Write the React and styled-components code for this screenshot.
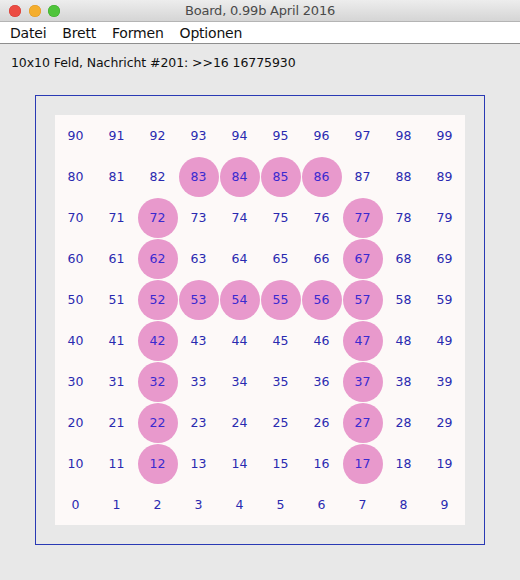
import React from "react";
import styled, { createGlobalStyle } from "styled-components";

const GlobalStyle = createGlobalStyle`
	html, body {
		margin: 0;
		padding: 0;
		background: #e8e8e8;
	}
	body {
		font-family: "DejaVu Sans", "Liberation Sans", sans-serif;
	}
`;

const marked = [83, 84, 85, 86, 72, 77, 62, 67, 52, 53, 54, 55, 56, 57, 42, 47, 32, 37, 22, 27, 12, 17];

function App() {
	const rows = [];
	for (let r = 9; r >= 0; r--) {
		for (let c = 0; c < 10; c++) {
			rows.push(r * 10 + c);
		}
	}

	return (
		<StyledWindow>
			<GlobalStyle />
			<StyledTitleBar>
				<StyledLights>
					<StyledLight color="#ec4b42" edge="#d33b33" />
					<StyledLight color="#f5ae2c" edge="#dd9620" />
					<StyledLight color="#4fc43b" edge="#3aa82a" />
				</StyledLights>
				<StyledTitle>Board, 0.99b April 2016</StyledTitle>
			</StyledTitleBar>
			<StyledMenuBar>
				<StyledMenuItem>Datei</StyledMenuItem>
				<StyledMenuItem>Brett</StyledMenuItem>
				<StyledMenuItem>Formen</StyledMenuItem>
				<StyledMenuItem>Optionen</StyledMenuItem>
			</StyledMenuBar>
			<StyledStatus>10x10 Feld, Nachricht #201: &gt;&gt;16 16775930</StyledStatus>
			<StyledFrame>
				<StyledBoard>
					{rows.map((n) => (
						<StyledCell key={n}>
							<StyledStone filled={marked.includes(n)}>{n}</StyledStone>
						</StyledCell>
					))}
				</StyledBoard>
			</StyledFrame>
		</StyledWindow>
	);
}

const StyledWindow = styled.div`
	width: 520px;
	height: 580px;
	background: #e8e8e8;
	overflow: hidden;
`;
const StyledTitleBar = styled.div`
	position: relative;
	height: 22px;
	background: linear-gradient(#ededed, #d5d5d5);
	border-bottom: 1px solid #b4b4b4;
	box-sizing: border-box;
	display: flex;
	align-items: center;
	justify-content: center;
`;
const StyledLights = styled.div`
	position: absolute;
	left: 9px;
	top: 5px;
	display: flex;
	gap: 7.5px;
`;
const StyledLight = styled.span`
	width: 12px;
	height: 12px;
	border-radius: 50%;
	background: ${(p) => p.color};
	box-shadow: inset 0 0 0 0.5px ${(p) => p.edge};
`;
const StyledTitle = styled.div`
	font-size: 13px;
	color: #4a4a4a;
	font-family: "DejaVu Sans", sans-serif;
	letter-spacing: -0.2px;
`;
const StyledMenuBar = styled.div`
	height: 22px;
	background: #ffffff;
	border-bottom: 1px solid #8e8e8e;
	box-sizing: border-box;
	display: flex;
	align-items: center;
	padding-left: 10px;
	gap: 16px;
`;
const StyledMenuItem = styled.span`
	font-size: 14px;
	color: #111;
	letter-spacing: -0.2px;
`;
const StyledStatus = styled.div`
	font-size: 12.5px;
	color: #111;
	padding: 11px 0 0 11px;
	height: 22px;
	letter-spacing: -0.08px;
`;
const StyledFrame = styled.div`
	margin: 18px 0 0 35px;
	width: 410px;
	padding: 19px;
	border: 1px solid #2a3ab4;
`;
const StyledBoard = styled.div`
	display: grid;
	grid-template-columns: repeat(10, 41px);
	grid-template-rows: repeat(10, 41px);
	background: #fdf9f8;
`;
const StyledCell = styled.div`
	display: flex;
	align-items: center;
	justify-content: center;
`;
const StyledStone = styled.div`
	width: 40px;
	height: 40px;
	border-radius: 50%;
	background: ${(p) => (p.filled ? "#e899cc" : "transparent")};
	display: flex;
	align-items: center;
	justify-content: center;
	font-size: 12.5px;
	color: ${(p) => (p.filled ? "#3a2ad0" : "#2a2ab0")};
`;

export default App;
